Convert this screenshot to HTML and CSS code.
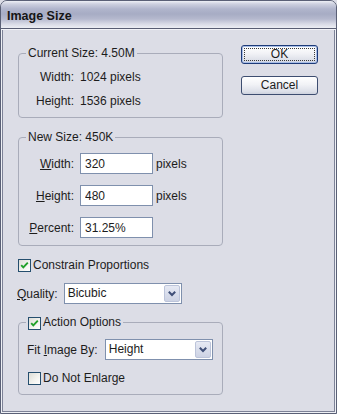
FILE: index.html
```html
<!DOCTYPE html>
<html>
<head>
<meta charset="utf-8">
<title>Image Size</title>
<link rel="stylesheet" href="styles.css">
</head>
<body>
<div class="window">
  <div class="titlebar"><span class="title">Image Size</span></div>
  <div class="content">
    <div class="main">
      <fieldset class="group group-current">
        <legend>Current Size: 4.50M</legend>
        <div class="grid grid-current">
          <span class="lbl">Width:</span><span class="val">1024 pixels</span>
          <span class="lbl">Height:</span><span class="val">1536 pixels</span>
        </div>
      </fieldset>

      <fieldset class="group group-new">
        <legend>New Size: 450K</legend>
        <div class="grid grid-new">
          <span class="lbl"><u>W</u>idth:</span><input class="field" type="text" value="320" readonly><span class="unit">pixels</span>
          <span class="lbl"><u>H</u>eight:</span><input class="field" type="text" value="480" readonly><span class="unit">pixels</span>
          <span class="lbl"><u>P</u>ercent:</span><input class="field" type="text" value="31.25%" readonly><span></span>
        </div>
      </fieldset>

      <div class="check-row constrain">
        <span class="cb checked"><svg viewBox="0 0 11 11" width="11" height="11"><path d="M2.2 5.2 L4.3 7.4 L8.8 2.6" fill="none" stroke="#22a12a" stroke-width="1.9"/></svg></span>
        <span class="check-text">Constrain Proportions</span>
      </div>

      <div class="quality-row">
        <span class="lbl"><u>Q</u>uality:</span>
        <div class="select select-quality">
          <span class="select-value">Bicubic</span>
          <span class="select-btn"><svg viewBox="0 0 14 17" width="14" height="17"><path d="M3.8 6.8 L7 10 L10.2 6.8" fill="none" stroke="#3f4f78" stroke-width="2"/></svg></span>
        </div>
      </div>

      <fieldset class="group group-action">
        <legend>
          <span class="cb checked"><svg viewBox="0 0 11 11" width="11" height="11"><path d="M2.2 5.2 L4.3 7.4 L8.8 2.6" fill="none" stroke="#22a12a" stroke-width="1.9"/></svg></span>
          <span class="check-text">Action Options</span>
        </legend>
        <div class="action-body">
          <div class="fit-row">
            <span class="lbl">Fit <u>I</u>mage By:</span>
            <div class="select select-fit">
              <span class="select-value">Height</span>
              <span class="select-btn"><svg viewBox="0 0 14 17" width="14" height="17"><path d="M3.8 6.8 L7 10 L10.2 6.8" fill="none" stroke="#3f4f78" stroke-width="2"/></svg></span>
            </div>
          </div>
          <div class="check-row enlarge">
            <span class="cb"></span>
            <span class="check-text">Do Not Enlarge</span>
          </div>
        </div>
      </fieldset>
    </div>

    <div class="buttons">
      <button class="btn btn-default" type="button"><span class="btn-focus">OK</span></button>
      <button class="btn" type="button"><span class="btn-inner">Cancel</span></button>
    </div>
  </div>
</div>
</body>
</html>
```

FILE: styles.css
```css
* { box-sizing: border-box; }

html, body {
  margin: 0;
  padding: 0;
}

body {
  width: 337px;
  height: 414px;
  background: #dcdde6;
  font-family: "Liberation Sans", Arial, sans-serif;
  font-size: 12px;
  color: #1c1c1c;
}

.window {
  width: 337px;
  height: 414px;
  border: 1px solid #5a6076;
  border-radius: 7px 7px 0 0;
  background: #dcdde6;
  overflow: hidden;
  display: flex;
  flex-direction: column;
  box-shadow:
    inset 1px 0 #eef0f5,
    inset -1px 0 #eef0f5,
    inset 0 -1px #eef0f5,
    inset 2px 0 #7d8297,
    inset -2px 0 #7d8297,
    inset 0 -2px #7d8297;
}

.titlebar {
  height: 28px;
  flex: none;
  display: flex;
  align-items: center;
  padding: 3px 0 0 6px;
  border-bottom: 1px solid #585d73;
  background: linear-gradient(to bottom,
    #eef0f6 0px,
    #cdd0df 3px,
    #b0b5cc 8px,
    #a7acc4 13px,
    #b5b9ce 18px,
    #d8dae6 23px,
    #eceef4 27px);
}

.title {
  font-weight: bold;
  font-size: 12.5px;
  color: #161616;
  line-height: 14px;
}

.content {
  flex: 1;
  display: flex;
  padding: 16px 0 0 17px;
  gap: 18px;
  box-shadow: inset 0 1px #f2f3f8;
}

.main {
  width: 205px;
  display: flex;
  flex-direction: column;
}

.group {
  margin: 0;
  padding: 0;
  border: 1px solid #a9acba;
  border-radius: 4px;
  min-width: 0;
}

.group legend {
  margin-left: 7px;
  padding: 0 2px;
  line-height: 14px;
  height: 14px;
}

.grid {
  display: grid;
  align-items: center;
}

.lbl {
  justify-self: end;
  white-space: nowrap;
  line-height: 14px;
}

.group-current {
  margin-top: 1px;
}

.grid-current {
  grid-template-columns: 55px auto;
  row-gap: 10px;
  padding: 10px 0 9px;
  line-height: 14px;
}

.val {
  margin-left: 6px;
}

.group-new {
  margin-top: 12px;
}

.grid-new {
  grid-template-columns: 55px auto 1fr;
  row-gap: 11px;
  padding: 9px 0 7px;
}

.field {
  width: 73px;
  height: 21px;
  margin: 0 0 0 6px;
  padding: 0 4px;
  border: 1px solid #7f90ad;
  background: #fff;
  font-family: "Liberation Sans", Arial, sans-serif;
  font-size: 12px;
  color: #1c1c1c;
  outline: none;
}

.unit {
  margin-left: 3px;
}

.check-row {
  display: flex;
  align-items: center;
  height: 14px;
}

.check-text {
  margin-left: 2px;
  line-height: 14px;
}

.cb {
  width: 13px;
  height: 13px;
  flex: none;
  border: 1px solid #254e6e;
  background: linear-gradient(135deg, #dcdcd6 0%, #f4f4f0 60%, #ffffff 100%);
  display: flex;
  align-items: center;
  justify-content: center;
}

.constrain {
  margin-top: 12px;
}

.quality-row {
  margin-top: 11px;
  margin-left: -1px;
  display: flex;
  align-items: center;
}

.select {
  height: 21px;
  display: flex;
  align-items: stretch;
  border: 1px solid #7f90ad;
  background: #fff;
}

.select-value {
  flex: 1;
  padding-left: 3px;
  line-height: 19px;
}

.select-btn {
  width: 16px;
  flex: none;
  margin: 1px;
  border: 1px solid #bcc4da;
  border-radius: 2px;
  background: linear-gradient(to bottom, #e6e9f4, #cdd3e4);
  display: flex;
  align-items: center;
  justify-content: center;
}

.select-quality {
  width: 118px;
  margin-left: 6px;
}

.group-action {
  margin-top: 11px;
}

.group-action legend {
  display: flex;
  align-items: center;
}

.group-action legend .cb {
  margin-top: 2px;
}

.action-body {
  padding: 10px 0 9px 8px;
}

.fit-row {
  display: flex;
  align-items: center;
}

.select-fit {
  width: 108px;
  margin-left: 7px;
}

.enlarge {
  margin-top: 11px;
  margin-left: 1px;
}

.buttons {
  display: flex;
  flex-direction: column;
  gap: 12px;
}

.btn {
  width: 77px;
  height: 19px;
  padding: 2px;
  margin: 0;
  border: 1px solid #3d4d70;
  border-radius: 3px;
  background: linear-gradient(to bottom, #ffffff 0%, #f1f2f6 45%, #dcdfe8 85%, #cdd1de 100%);
  font-family: "Liberation Sans", Arial, sans-serif;
  font-size: 12px;
  color: #1c1c1c;
  display: flex;
}

.btn-default {
  border-color: #1d3a78;
  box-shadow: inset 0 0 0 1px #a7bde6;
}

.btn-focus,
.btn-inner {
  flex: 1;
  display: flex;
  align-items: center;
  justify-content: center;
  line-height: 13px;
}

.btn-focus {
  border: 1px dotted #3a3a3a;
}
```
